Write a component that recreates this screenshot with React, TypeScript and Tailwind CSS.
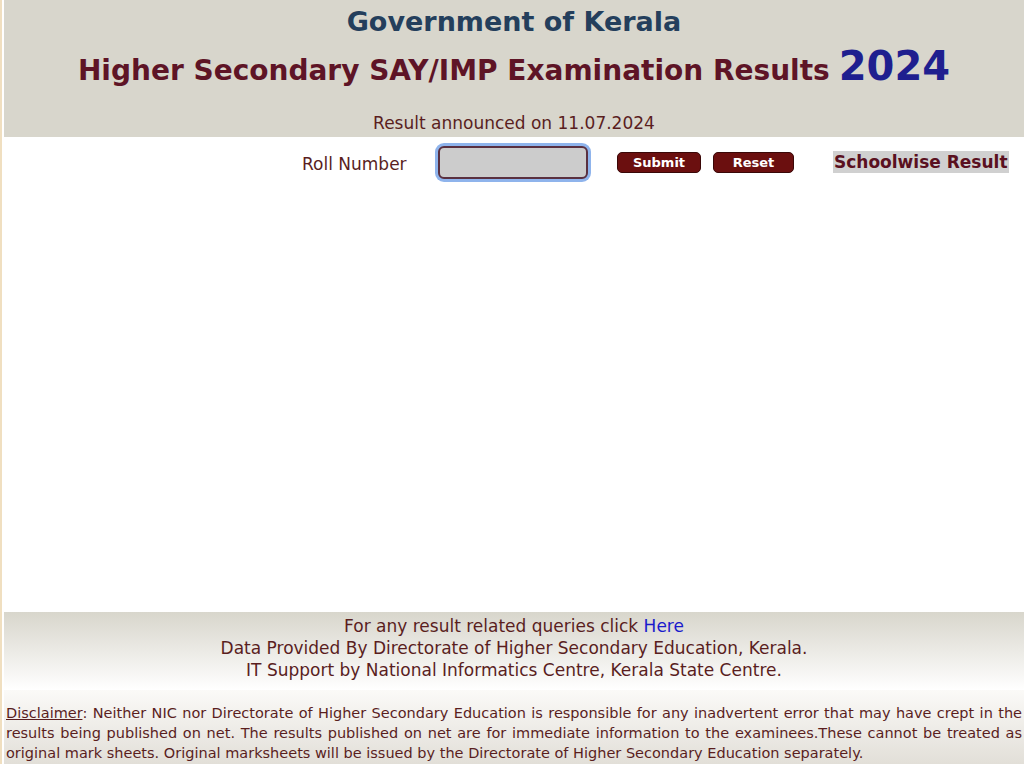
import React from "react";

export default function App() {
  return (
    <div
      className="w-[1024px] h-[764px] overflow-hidden bg-white flex flex-col border-l-[2px] border-[#f0dfc0] pl-[2px]"
      style={{ fontFamily: '"DejaVu Sans", Verdana, sans-serif' }}
    >
      <div className="bg-[#d8d6cc] h-[137px] flex flex-col items-center pt-[4px]">
        <div className="text-[#243f5c] font-bold text-[27px] leading-[36px]">Government of Kerala</div>
        <div className="text-[#5e1426] font-bold text-[28px] leading-[48px] mt-[2px] flex items-baseline">
          <span>Higher Secondary SAY/IMP Examination Results</span>
          <span className="text-[#1f1f8f] text-[40px] ml-[9px]">2024</span>
        </div>
        <div className="text-[#5a1e1e] text-[17px] leading-[20px] mt-[18px]">Result announced on 11.07.2024</div>
      </div>
      <div className="flex items-center h-[50px]">
        <div className="w-[298px]" />
        <div className="text-[#5a1e1e] text-[17px] leading-[22px] w-[136px] pt-[3px]">Roll Number</div>
        <input
          className="w-[150px] h-[33px] bg-[#cccccc] border-2 border-[#5a3040] rounded-[6px] outline-none ring-[3px] ring-[#8fb4ec]"
          type="text"
        />
        <button className="ml-[29px] w-[84px] h-[21px] bg-[#6b0f0f] rounded-[5px] text-white font-bold text-[13px] leading-[19px] border border-[#3a0808]">
          Submit
        </button>
        <button className="ml-[12px] w-[81px] h-[21px] bg-[#6b0f0f] rounded-[5px] text-white font-bold text-[13px] leading-[19px] border border-[#3a0808]">
          Reset
        </button>
        <div className="ml-[39px] bg-[#d0d0d0] text-[#5a1020] font-bold text-[17px] leading-[22px] px-[1px]">
          Schoolwise Result
        </div>
      </div>
      <div className="flex-1" />
      <div className="h-[78px] bg-gradient-to-b from-[#d8d6cc] to-white flex flex-col items-center pt-[3px] text-[#5a1e1e] text-[17px] leading-[22px]">
        <div>
          For any result related queries click <span className="text-[#1a1acc]">Here</span>
        </div>
        <div>Data Provided By Directorate of Higher Secondary Education, Kerala.</div>
        <div>IT Support by National Informatics Centre, Kerala State Centre.</div>
      </div>
      <div className="h-[74px] bg-gradient-to-b from-[#fbfaf8] to-[#e2dfd8] text-[#5a1e1e] text-[14.5px] leading-[20px] text-justify px-[2px] pt-[13px]">
        <span className="underline">Disclaimer</span>: Neither NIC nor Directorate of Higher Secondary Education is responsible for any inadvertent error that may have crept in the results being published on net. The results published on net are for immediate information to the examinees.These cannot be treated as original mark sheets. Original marksheets will be issued by the Directorate of Higher Secondary Education separately.
      </div>
    </div>
  );
}
